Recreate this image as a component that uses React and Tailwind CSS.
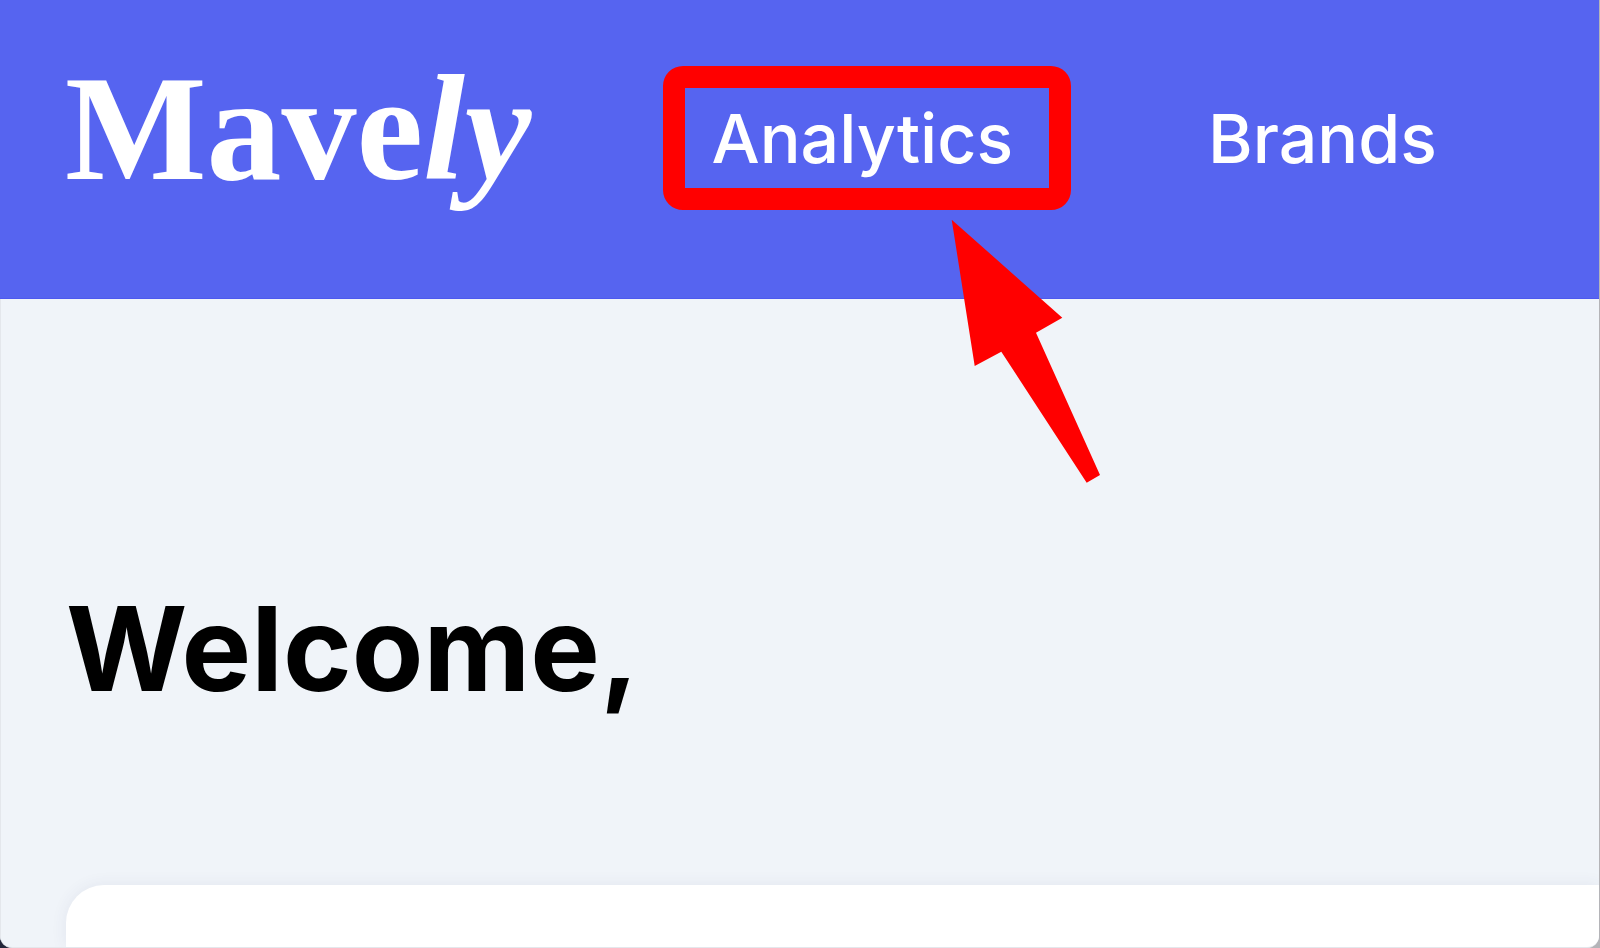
const navItems = [
  { label: "Analytics", href: "#analytics", highlighted: true },
  { label: "Brands", href: "#brands" },
];

function Logo() {
  return (
    <a
      href="#home"
      className="font-['Liberation_Serif',serif] text-[150px] leading-[160px] font-bold text-white"
    >
      Mave<span className="italic">ly</span>
    </a>
  );
}

function Pointer() {
  return (
    <svg
      viewBox="0 0 150 264"
      className="absolute top-[123px] left-60 z-10 w-[150px] h-[264px]"
      fill="#ff0000"
      aria-hidden="true"
    >
      <path d="M.7.7 111.3 98.7 85 113.7 149 256 135.7 263.7 50.3 132.7 23.7 147Z" />
    </svg>
  );
}

function NavLink({ item }) {
  return (
    <a
      href={item.href}
      className="relative text-[68px] leading-[84px] font-medium text-white whitespace-nowrap"
    >
      {item.label}
      {item.highlighted && (
        <>
          <span className="absolute -top-[30px] -left-12 w-[408px] h-36 rounded-[20px] border-[22px] border-[#ff0000]" />
          <Pointer />
        </>
      )}
    </a>
  );
}

export default function App() {
  return (
    <div className="min-h-screen flex bg-linear-to-r from-[#23263a] from-50% to-[#b4b4b8] to-50% font-['Inter',sans-serif]">
      <div className="flex-1 min-w-0 mr-px flex flex-col overflow-hidden rounded-b-xl border-b border-[#e4e7ec] bg-[#f0f4f9]">
        <header className="h-[299px] shrink-0 flex items-start gap-[180px] pl-[65px] pt-12 bg-[#5664f0] border-b border-[#4d59ef]">
          <Logo />
          <nav className="flex items-start gap-[195px] pt-12">
            {navItems.map((item) => (
              <NavLink key={item.label} item={item} />
            ))}
          </nav>
        </header>

        <main className="flex-1 flex flex-col pl-[65px] border-l border-[#e4e7ec]">
          <h1 className="pt-[280px] text-[117px] leading-[140px] font-bold text-black">
            Welcome,
          </h1>
          <section className="mt-[166px] flex-1 min-h-[62px] rounded-tl-[38px] bg-white shadow-[0_0_16px_rgba(60,70,110,0.08)]" />
        </main>
      </div>
    </div>
  );
}
